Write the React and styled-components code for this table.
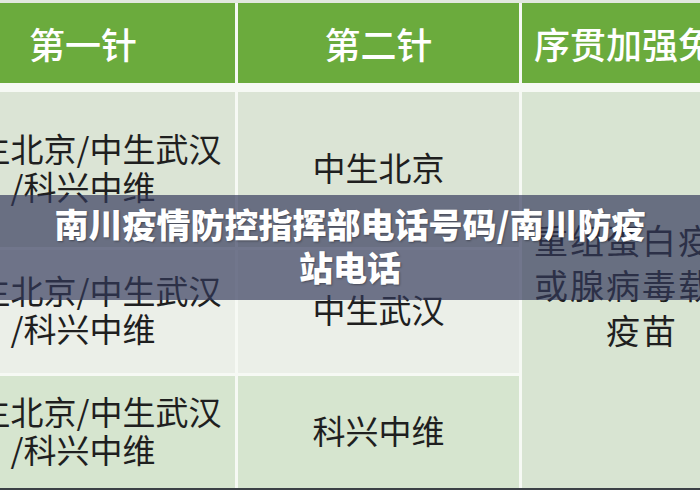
import React from "react";
import styled, { createGlobalStyle } from "styled-components";

const Global = createGlobalStyle`
  html, body { margin: 0; padding: 0; background: #f6f9f4; }
  body { overflow: hidden; font-family: "Noto Sans CJK SC", "Noto Sans", sans-serif; }
`;

const Frame = styled.div`
  position: relative;
  width: 700px;
  height: 490px;
  overflow: hidden;
  background: #f6f9f4;
  border-top: 3px solid #e2e8de;
  box-sizing: border-box;
  border-bottom: 2px solid #3b4046;
`;

const Table = styled.div`
  display: grid;
  grid-template-columns: 304px 281px 250px;
  grid-template-rows: 86px 155px 123px 112px;
  gap: 3px;
  margin-left: -69px;
  width: max-content;
`;

const HeadCell = styled.div`
  height: 80px;
  box-sizing: border-box;
  padding-right: ${(p) => (p.$shift ? "10px" : "0")};
  background: #6bab3d;
  color: #ffffff;
  font-size: 36px;
  font-weight: 500;
  display: flex;
  align-items: center;
  justify-content: center;
  white-space: nowrap;
  overflow: hidden;
`;

const rowBg = { 1: "#dbe4d5", 2: "#ebefe8", 3: "#d6e5cf" };

const Cell = styled.div`
  background: ${(p) => rowBg[p.$row]};
  color: #1f1f1f;
  font-size: 33px;
  line-height: 38px;
  padding-bottom: 5px;
  display: flex;
  align-items: center;
  justify-content: center;
  text-align: center;
  white-space: nowrap;
`;

const MergedCell = styled.div`
  grid-column: 3;
  grid-row: 2 / span 3;
  background: #d8e4d2;
  color: #1f1f1f;
  font-size: 34px;
  line-height: 45px;
  letter-spacing: 2px;
  display: flex;
  align-items: center;
  justify-content: center;
  text-align: center;
  white-space: nowrap;
  padding: 0 10px 12px 0;
`;

const Banner = styled.div`
  position: absolute;
  left: 0;
  right: 0;
  top: 192px;
  height: 105px;
  padding-bottom: 6px;
  box-sizing: border-box;
  background: rgba(50, 56, 90, 0.68);
  display: flex;
  align-items: center;
  justify-content: center;
`;

const Title = styled.h1`
  margin: 0;
  width: 604px;
  text-align: center;
  color: #ffffff;
  font-size: 34px;
  font-weight: 900;
  line-height: 43px;
  text-shadow: 1px 1px 2px rgba(0, 0, 0, 0.35);
`;

const rows = [
  { row: 1, second: "中生北京" },
  { row: 2, second: "中生武汉" },
  { row: 3, second: "科兴中维" },
];

export default function App() {
  return (
    <>
      <Global />
      <Frame>
        <Table>
          <HeadCell>第一针</HeadCell>
          <HeadCell>第二针</HeadCell>
          <HeadCell $shift>序贯加强免疫</HeadCell>
          {rows.map((r, i) => (
            <React.Fragment key={r.row}>
              <Cell $row={r.row} style={{ gridRow: i + 2, gridColumn: 1 }}>
                中生北京/中生武汉
                <br />
                /科兴中维
              </Cell>
              <Cell $row={r.row} style={{ gridRow: i + 2, gridColumn: 2 }}>
                {r.second}
              </Cell>
            </React.Fragment>
          ))}
          <MergedCell>
            重组蛋白疫苗
            <br />
            或腺病毒载体
            <br />
            疫苗
          </MergedCell>
        </Table>
        <Banner>
          <Title>南川疫情防控指挥部电话号码/南川防疫站电话</Title>
        </Banner>
      </Frame>
    </>
  );
}
